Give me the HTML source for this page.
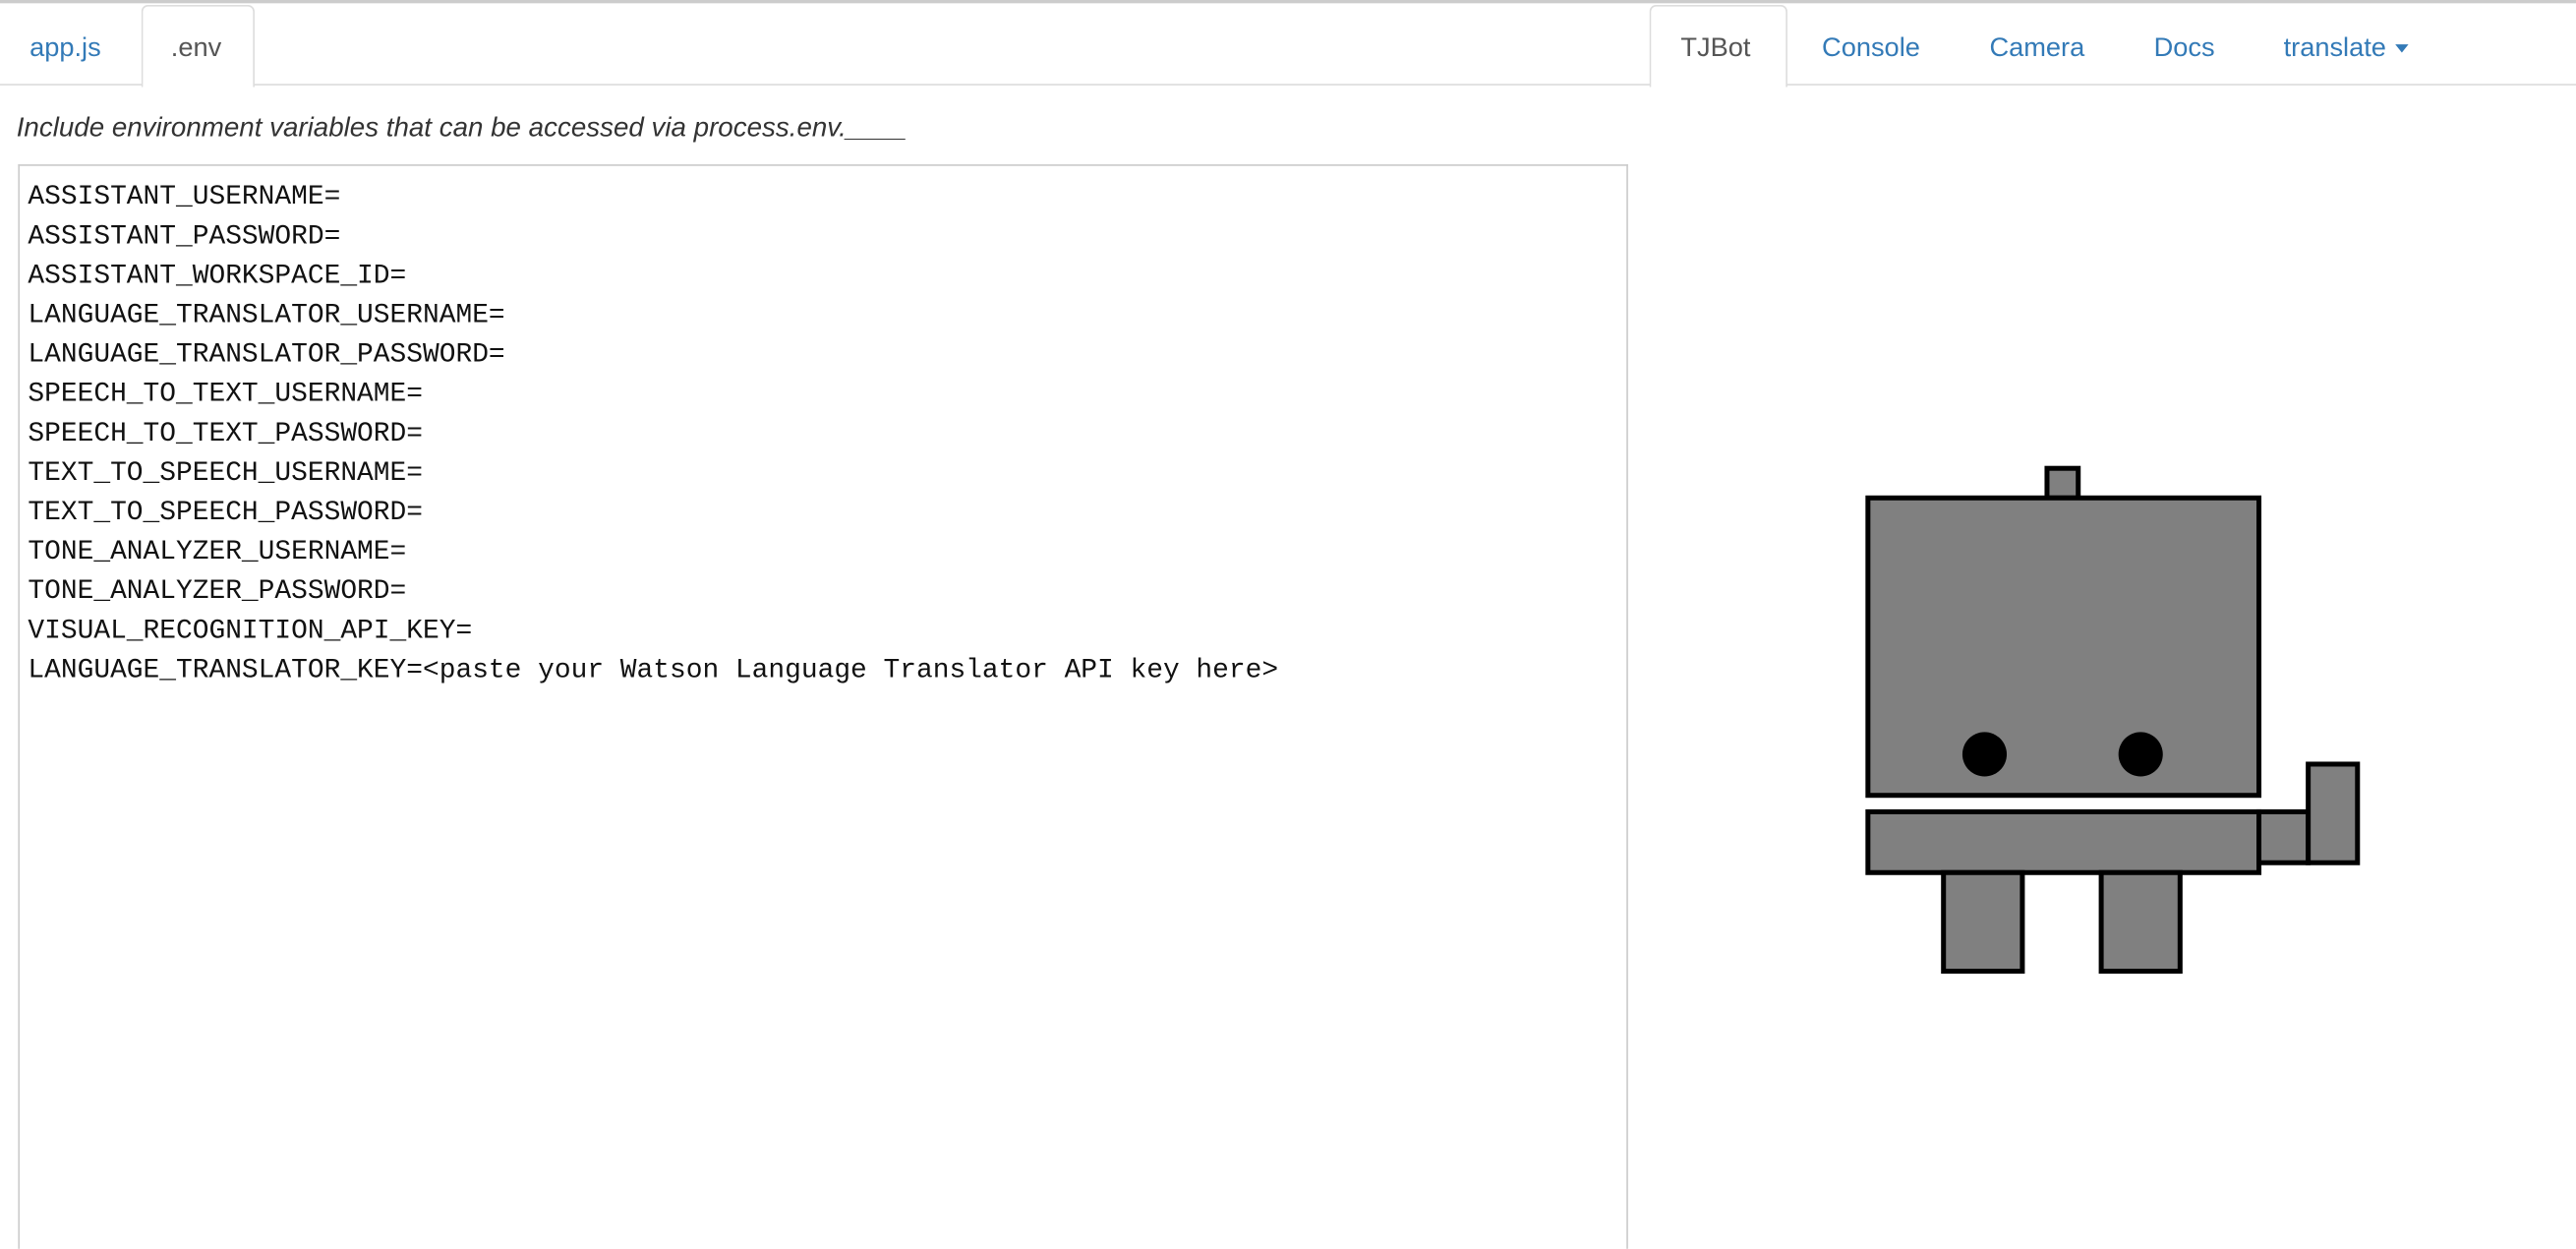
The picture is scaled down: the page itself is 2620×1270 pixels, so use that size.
<!DOCTYPE html>
<html><head><meta charset="utf-8"><style>
html,body{margin:0;padding:0;background:#fff;width:2620px;height:1270px;overflow:hidden}
#w{position:absolute;left:0;top:0;width:1568px;height:760px;overflow:hidden;transform:scale(1.67092);transform-origin:0 0;font-family:"Liberation Sans",Arial,sans-serif}
.top{position:absolute;left:0;top:0;width:1568px;height:2px;background:#ccc}
.bar{position:absolute;left:0;top:51px;width:1568px;height:1px;background:#ddd}
.tab{position:absolute;top:11px;font-size:16.3px;color:#337ab7;line-height:36px}
.act{position:absolute;top:3px;height:49px;border:1px solid #ddd;border-bottom:none;border-radius:4px 4px 0 0;background:#fff}
.intro{position:absolute;left:10px;top:68px;font-size:16.6px;font-style:italic;color:#333}
.ta{position:absolute;left:11px;top:100px;width:980px;height:660px;border:1px solid #ccc;border-bottom:none;box-sizing:border-box}
pre{position:absolute;left:17px;top:109px;margin:0;font-family:"Liberation Mono","Courier New",monospace;font-size:16.7px;line-height:24px;color:#111}
.caret{display:inline-block;width:0;height:0;border-left:4px solid transparent;border-right:4px solid transparent;border-top:5px solid #337ab7;vertical-align:middle;margin-left:6px}
</style></head><body><div id="w">
<div class="top"></div>
<div class="bar"></div>
<div class="act" style="left:86px;width:67px"></div>
<div class="act" style="left:1004px;width:82px"></div>
<div class="tab" style="left:18px">app.js</div>
<div class="tab" style="left:104px;color:#555">.env</div>
<div class="tab" style="left:1023px;color:#555">TJBot</div>
<div class="tab" style="left:1109px">Console</div>
<div class="tab" style="left:1211px">Camera</div>
<div class="tab" style="left:1311px">Docs</div>
<div class="tab" style="left:1390px">translate<span class="caret"></span></div>
<div class="intro">Include environment variables that can be accessed via process.env.____</div>
<div class="ta"></div>
<pre>ASSISTANT_USERNAME=
ASSISTANT_PASSWORD=
ASSISTANT_WORKSPACE_ID=
LANGUAGE_TRANSLATOR_USERNAME=
LANGUAGE_TRANSLATOR_PASSWORD=
SPEECH_TO_TEXT_USERNAME=
SPEECH_TO_TEXT_PASSWORD=
TEXT_TO_SPEECH_USERNAME=
TEXT_TO_SPEECH_PASSWORD=
TONE_ANALYZER_USERNAME=
TONE_ANALYZER_PASSWORD=
VISUAL_RECOGNITION_API_KEY=
LANGUAGE_TRANSLATOR_KEY=&lt;paste your Watson Language Translator API key here&gt;</pre>
<svg style="position:absolute;left:0;top:0" width="1568" height="760">
<g fill="#808080" stroke="#000" stroke-width="3">
<rect x="1246" y="285" width="19" height="18"/>
<rect x="1137" y="303" width="238" height="181"/>
<rect x="1137" y="494" width="238" height="37"/>
<rect x="1375" y="494" width="30" height="31"/>
<rect x="1405" y="465" width="30" height="60"/>
<rect x="1183" y="531" width="48" height="60"/>
<rect x="1279" y="531" width="48" height="60"/>
</g>
<circle cx="1208" cy="459" r="13.5" fill="#000"/>
<circle cx="1303" cy="459" r="13.5" fill="#000"/>
</svg>
</div></body></html>
